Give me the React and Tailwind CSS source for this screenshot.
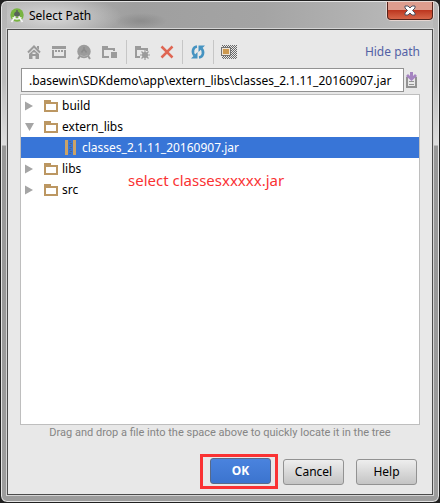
import React from "react";

const grey = "#9b9b9b";

function StudioLogo() {
  return (
    <svg width="16" height="16" viewBox="0 0 16 16" aria-hidden="true">
      <circle cx="8" cy="7" r="6.7" fill="#78b441" />
      <path d="M8 6L2.500 14M8 6l5.500 8" stroke="#f4f4f4" strokeWidth="1.700" />
      <path d="M3.500 9.500q4.500 3 9 0" fill="none" stroke="#f4f4f4" strokeWidth="1.500" />
      <path d="M5 7a3 3.500 0 0 1 6 0L9.500 8.500h-3z" fill="#59635a" />
      <path d="M8 2v4" stroke="#59635a" strokeWidth="1.500" />
    </svg>
  );
}

function HomeIcon() {
  return (
    <svg width="16" height="16" viewBox="0 0 16 16" aria-hidden="true">
      <path d="M2 8.500L8 2.500l6 6" fill="none" stroke={grey} strokeWidth="2" />
      <path d="M11 2h2v4l-2-2z" fill={grey} />
      <path d="M8 5.500l5 4.500v5H9.500v-3h-3v3H3v-5z" fill={grey} />
      <path d="M6.500 8.500h3V10h-3z" fill="#e8e8e8" />
    </svg>
  );
}

function ProjectIcon() {
  return (
    <svg width="16" height="16" viewBox="0 0 16 16" shapeRendering="crispEdges" aria-hidden="true">
      <path d="M1 2h14v3H1zM1 6h2v8H1zM13 6h2v8h-2zM3 12h10v2H3zM4 6h2v2H4zM7 6h2v2H7zM10 6h2v2h-2z" fill={grey} />
    </svg>
  );
}

function ModuleIcon() {
  return (
    <svg width="16" height="16" viewBox="0 0 16 16" aria-hidden="true">
      <circle cx="8" cy="7.500" r="6.700" fill={grey} />
      <path d="M4.500 11L2 15M11.500 11l2.500 4" stroke={grey} strokeWidth="2" />
      <path d="M8 3v4M5.500 8.500L8 5l2.500 3.500" fill="none" stroke="#8c8c8c" strokeWidth="1.500" />
      <path d="M4 11q4 3 8 0" fill="none" stroke="#b0b0b0" />
    </svg>
  );
}

function FolderSquareIcon() {
  return (
    <svg width="16" height="16" viewBox="0 0 16 16" shapeRendering="crispEdges" aria-hidden="true">
      <path d="M1 2h6v2h7v3h-2V6H3v6h5v2H1zM10 8h6v6h-6z" fill={grey} />
    </svg>
  );
}

function NewFolderIcon() {
  return (
    <svg width="16" height="16" viewBox="0 0 16 16" aria-hidden="true">
      <path d="M1 2h6v2h7v3h-2V6H3v6h3v2H1z" fill={grey} shapeRendering="crispEdges" />
      <path d="M11 6v10M6 11h10M7.500 7.500l7 7M14.500 7.500l-7 7" stroke={grey} strokeWidth="1.200" />
      <circle cx="11" cy="11" r="3" fill={grey} />
    </svg>
  );
}

function DeleteIcon() {
  return (
    <svg width="16" height="16" viewBox="0 0 16 16" aria-hidden="true">
      <path d="M2.500 2.500L8 8l5.500-5.500M2.500 13.500L8 8l5.500 5.500" fill="none" stroke="#df6653" strokeWidth="2.500" />
    </svg>
  );
}

function RefreshIcon() {
  return (
    <svg width="16" height="16" viewBox="0 0 16 16" aria-hidden="true">
      <path d="M7 2.500C3 3 1.500 8 4.500 11.500M9 13.500c4-.500 5.500-5.500 2.500-9" fill="none" stroke="#4593c1" strokeWidth="2.600" />
      <path d="M1 14.500h6.500V8zM15 1.500H8.500V8z" fill="#4593c1" />
    </svg>
  );
}

function HiddenFilesIcon() {
  return (
    <svg width="16" height="16" viewBox="0 0 16 16" shapeRendering="crispEdges" aria-hidden="true">
      <defs>
        <pattern id="dither" width="2" height="2" patternUnits="userSpaceOnUse">
          <path d="M0 0h1v1H0zM1 1h1v1H1z" fill="#686868" />
        </pattern>
      </defs>
      <path d="M1 1h15v14H1z" fill="url(#dither)" />
      <path d="M0 3h10v9H0z" fill="#737373" />
      <path d="M1 4h8v7H1z" fill="#eee3d4" />
      <path d="M2 5h6v5H2z" fill="#cc984f" />
    </svg>
  );
}

function HistoryIcon() {
  return (
    <svg width="12" height="18" viewBox="0 0 12 18" aria-hidden="true">
      <path d="M0 6h2v9h7V6h2v11H0z" fill="#929292" />
      <path d="M3 10.500h5M3 13.500h5" stroke="#929292" strokeWidth="1" />
      <path d="M4 1h3v4l2-2 2 2-5.500 5L0 5l2-2 2 2z" fill="#a584c1" />
    </svg>
  );
}

function Folder() {
  return (
    <svg width="14" height="12" viewBox="0 0 14 12" shapeRendering="crispEdges" className="shrink-0" aria-hidden="true">
      <path d="M0 0h7v2h7v10H0zM2 4v6h10V4z" fill="#bc9762" fillRule="evenodd" />
    </svg>
  );
}

function JarIcon() {
  return (
    <svg width="11" height="15" viewBox="0 0 11 15" shapeRendering="crispEdges" className="shrink-0" aria-hidden="true">
      <path d="M0 0h3v15H0zM8 0h3v15H8z" fill="#cba367" />
      <path d="M4 1h2v1H4zM5 3h2v1H5zM4 5h2v1H4zM5 7h2v1H5zM4 9h2v1H4zM5 11h2v1H5zM4 13h2v1H4z" fill="#4f668c" />
    </svg>
  );
}

function Arrow({ open }) {
  return (
    <svg width="9" height="10" viewBox="0 0 9 10" className="shrink-0" aria-hidden="true">
      <path d={open ? "M0 1h9L4.500 9z" : "M0 0.500l8 4.500L0 9.500z"} fill="#a5a5a5" />
    </svg>
  );
}

function Tool({ label, children }) {
  return (
    <button type="button" aria-label={label} className="flex size-4 items-center justify-center">
      {children}
    </button>
  );
}

function Separator() {
  return <span className="h-6 w-px bg-[#c6c6c6]" />;
}

function FolderRow({ name, open = false }) {
  return (
    <li role="treeitem" aria-expanded={open} aria-selected={false} className="flex h-[21px] items-center pl-1">
      <Arrow open={open} />
      <span className="ml-2.5 flex items-center gap-1">
        <Folder />
        <span>{name}</span>
      </span>
    </li>
  );
}

const plainButton =
  "h-[26px] w-[61px] rounded-[3px] border border-[#929292] bg-linear-to-b from-[#eeeeee] to-[#c4c4c4] leading-4";

export default function App() {
  return (
    <div className="min-h-screen bg-[#202020] font-['Noto_Sans','Open_Sans',sans-serif] text-[12px] text-black">
      <div className="flex min-h-screen flex-col rounded-[7px] border border-[#202020] bg-[linear-gradient(180deg,#b4b4b4_0,#bcbcbc_80px,#dedede_144px,#989898_145px,#9c9c9c_100%)] px-[6px] pb-[7px] shadow-[inset_0_0_0_1px_#e4e4e4]">
        <header className="mt-px flex h-[27px] items-start justify-between bg-[radial-gradient(ellipse_26px_8px_at_134px_19px,#80808099,transparent),radial-gradient(ellipse_70px_22px_at_45px_15px,#d8d8d8,transparent),linear-gradient(90deg,#b4b4b4,#9f9f9f_30%,#a4a4a4_60%,#bdbdbd)]">
          <div className="flex h-7 items-center gap-1 pl-[2px]">
            <StudioLogo />
            <h1 className="leading-5">Select Path</h1>
          </div>
          <button
            type="button"
            aria-label="Close"
            className="flex h-[18px] w-[46px] items-center justify-center rounded-b-[4px] border border-t-0 border-[#54231b] bg-linear-to-b from-[#dd9d8e] from-45% via-[#bd3720] via-50% to-[#d76649] shadow-[0_0_0_1px_#e6d5d0]"
          >
            <svg width="12" height="11" viewBox="0 0 12 11" aria-hidden="true">
              <path d="M1 1h3l2 2 2-2h3v2L8.500 5.500 11 8v2H8L6 8l-2 2H1V8l2.500-2.500L1 3z" fill="#fff" stroke="#4c5160" />
            </svg>
          </button>
        </header>
        <main className="flex flex-1 flex-col border border-[#4c4c4c] bg-[#e8e8e8] px-3 shadow-[0_0_0_1px_#d4d4d4]">
          <div className="mt-[10px] flex h-6 items-center justify-between pl-[6px]">
            <div className="flex items-center gap-[9px]">
              <Tool label="Home"><HomeIcon /></Tool>
              <Tool label="Project directory"><ProjectIcon /></Tool>
              <Tool label="Module directory"><ModuleIcon /></Tool>
              <Tool label="Desktop directory"><FolderSquareIcon /></Tool>
              <div className="flex items-center gap-[7px]">
                <Separator />
                <div className="flex items-center gap-[9px]">
                  <Tool label="New folder"><NewFolderIcon /></Tool>
                  <Tool label="Delete"><DeleteIcon /></Tool>
                </div>
                <Separator />
                <Tool label="Refresh"><RefreshIcon /></Tool>
                <Separator />
                <Tool label="Show hidden files"><HiddenFilesIcon /></Tool>
              </div>
            </div>
            <button type="button" className="leading-5 text-[#5361a5]">Hide path</button>
          </div>
          <div className="mt-1 flex items-center gap-[2px] pl-px">
            <input
              type="text"
              aria-label="Path"
              defaultValue=".basewin\SDKdemo\app\extern_libs\classes_2.1.11_20160907.jar"
              className="h-6 min-w-0 flex-1 border border-[#929292] bg-white px-[7px] outline-none"
            />
            <button type="button" aria-label="Recent paths" className="w-[14px]"><HistoryIcon /></button>
          </div>
          <div className="relative mt-[2px] flex-1 border border-[#bebebe] bg-white">
            <ul role="tree" aria-label="Files">
              <FolderRow name="build" />
              <FolderRow name="extern_libs" open />
              <li role="treeitem" aria-selected={true} className="flex h-[21px] items-center gap-[6px] bg-[#3875d7] pl-11 text-white">
                <JarIcon />
                <span>classes_2.1.11_20160907.jar</span>
              </li>
              <FolderRow name="libs" />
              <FolderRow name="src" />
            </ul>
            <p className="absolute top-[73px] left-[107px] text-[15px] leading-6 text-[#fa3233]">select classesxxxxx.jar</p>
          </div>
          <p className="text-center font-[Roboto,'Noto_Sans',sans-serif] text-[11px] leading-4 text-[#858585]">
            Drag and drop a file into the space above to quickly locate it in the tree
          </p>
          <div className="mt-[13px] mb-[5px] flex items-center justify-end gap-3 pr-[3px]">
            <div className="-mr-[7px] border-3 border-[#fa3233] pt-px pr-1 pb-[2px] pl-[7px]">
              <button
                type="button"
                className="block h-[26px] w-[61px] rounded-[3px] border border-[#586a89] bg-linear-to-b from-[#4a83de] to-[#3c74ce] leading-4 font-bold text-white"
              >
                OK
              </button>
            </div>
            <button type="button" className={plainButton}>Cancel</button>
            <button type="button" className={plainButton}>Help</button>
          </div>
        </main>
      </div>
    </div>
  );
}
